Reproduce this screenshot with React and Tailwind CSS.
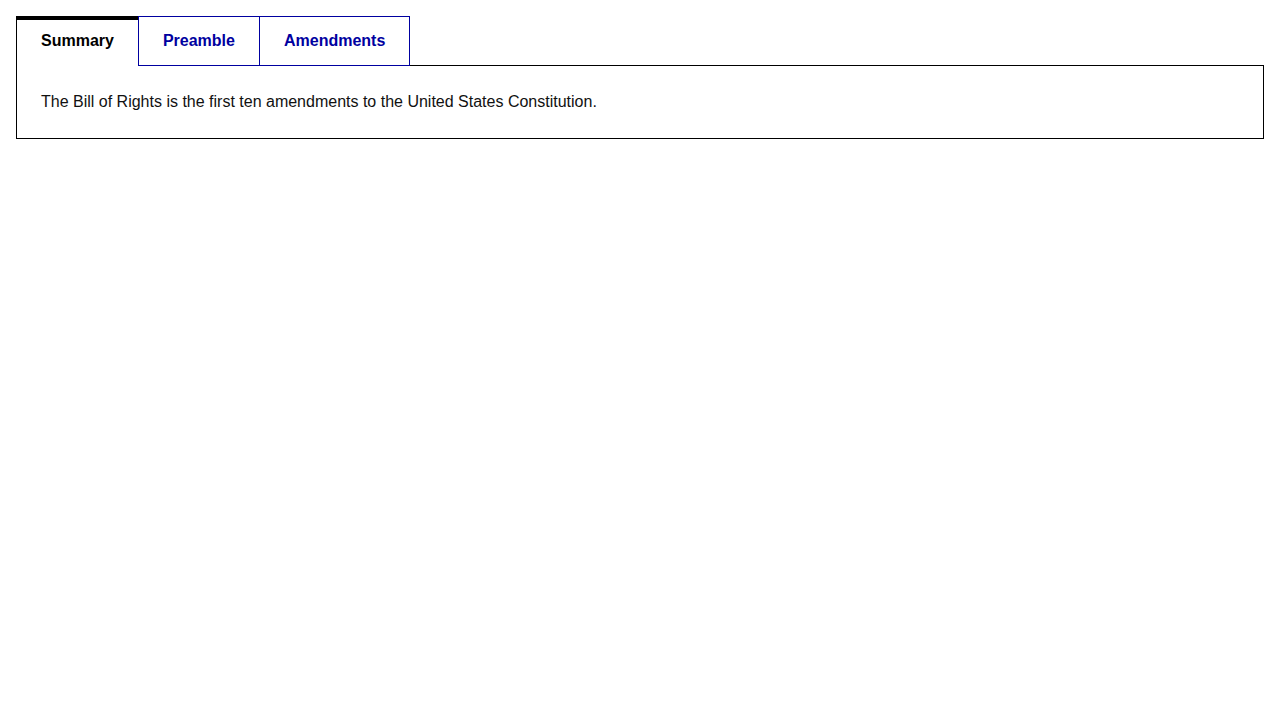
import { useState } from "react";

const tabs = [
  { id: "summary", label: "Summary", body: "The Bill of Rights is the first ten amendments to the United States Constitution." },
  { id: "preamble", label: "Preamble", body: "The Conventions of a number of the States, having at the time of their adopting the Constitution, expressed a desire..." },
  { id: "amendments", label: "Amendments", body: "Amendment I through Amendment X." },
];

const App = () => {
  const [active, setActive] = useState("summary");
  const current = tabs.find((t) => t.id === active);

  return (
    <div className="p-4 bg-white min-h-screen font-['Liberation_Sans',Arial,sans-serif] text-base">
      <div className="flex -mb-px relative z-10">
        {tabs.map((t, i) => {
          const isActive = t.id === active;
          const last = i === tabs.length - 1;
          return (
            <button
              key={t.id}
              onClick={() => setActive(t.id)}
              className={
                isActive
                  ? "h-[50px] px-6 pt-[9px] pb-[13px] leading-6 font-bold text-black bg-white border-l border-black border-t-4"
                  : "h-[50px] px-6 pt-[12px] pb-[12px] leading-6 font-bold text-[#0000a0] bg-white border-l border-t border-b border-[#0000a0] " +
                    (last ? "border-r" : "")
              }
            >
              {t.label}
            </button>
          );
        })}
      </div>
      <div className="border border-black px-6 py-6 leading-6 text-[#111]">
        {current.body}
      </div>
    </div>
  );
};

export default App;
